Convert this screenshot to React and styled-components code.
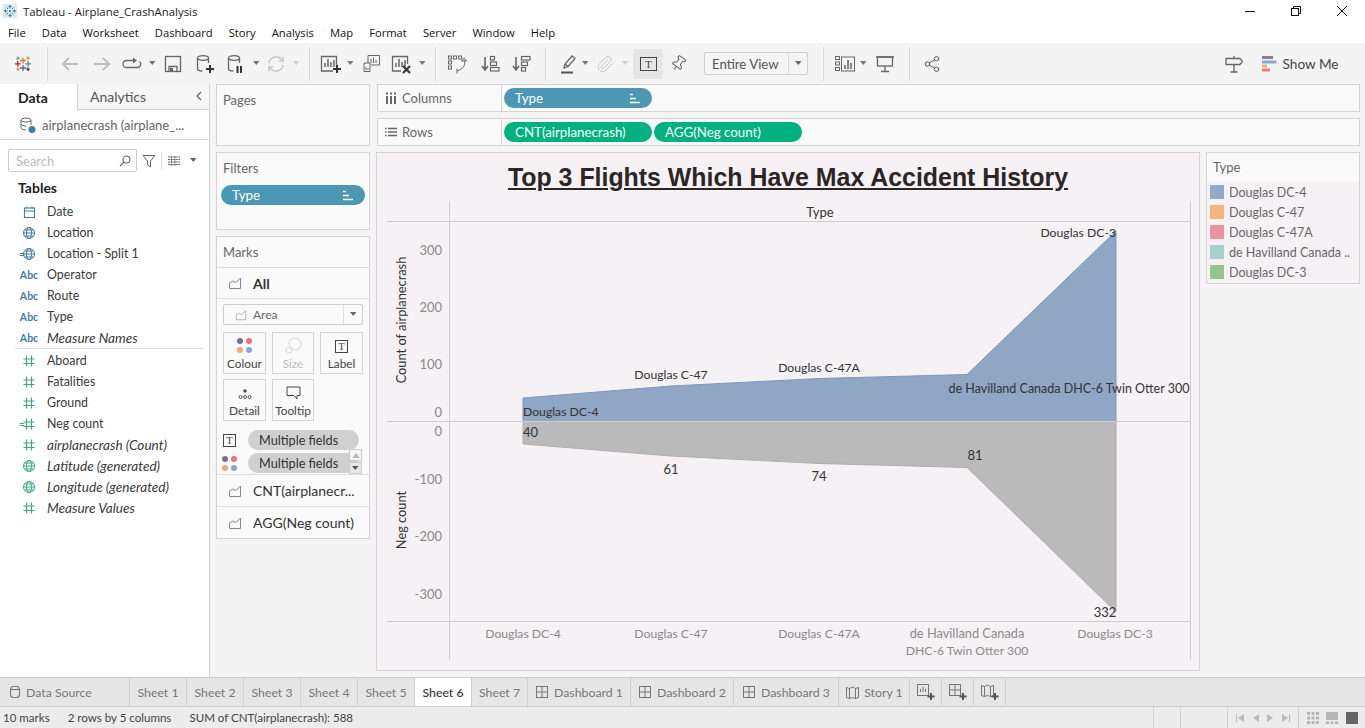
import React from "react";
import styled, { createGlobalStyle } from "styled-components";
import { Share2, Pin, Paperclip } from "lucide-react";

const book = `Lato, "Open Sans", sans-serif`;

const Global = createGlobalStyle`
  html, body { margin: 0; padding: 0; background: #fff; overflow: hidden; }
  * { box-sizing: border-box; }
`;

const Page = styled.div`
  width: 1365px; height: 728px; display: flex; flex-direction: column; overflow: hidden;
  font-family: ${book}; font-size: 13px; color: #333; background: #f4f4f4;
`;

const TitleBar = styled.div`
  height: 22px; background: #fff; display: flex; align-items: center; padding-left: 3px; flex: none;
`;
const TitleText = styled.div`
  font-family: "Open Sans", sans-serif; font-size: 11.4px; color: #222; margin-left: 6px;
`;
const WinControls = styled.div`
  margin-left: auto; display: flex; align-items: center; height: 22px;
`;
const WinButton = styled.div`
  width: 46px; height: 22px; display: flex; align-items: center; justify-content: center;
`;
const MenuBar = styled.div`
  height: 21px; flex: none; background: #fff; display: flex; align-items: center; padding-left: 8px; gap: 16.1px;
  font-family: "Open Sans", sans-serif; font-size: 11.2px; color: #111;
`;
const ToolBar = styled.div`
  height: 41px; flex: none; background: #f4f4f4; display: flex; align-items: center;
`;
const ToolSlot = styled.div`
  flex: none; display: flex; align-items: center; justify-content: center; height: 30px; color: #666;
  background: ${p => (p.$on ? "#e6e6e6" : "transparent")};
`;
const ToolSep = styled.div`
  width: 1px; height: 34px; background: #d8d8d8; flex: none;
`;
const FitBox = styled.div`
  flex: none; height: 23px; width: 104px; border: 1px solid #cfcfcf; border-radius: 2px; display: flex; align-items: center;
  font-size: 13.2px; color: #555;
`;
const FitLabel = styled.div`
  flex: 1; padding-left: 7px; border-right: 1px solid #d8d8d8; height: 100%; display: flex; align-items: center;
`;
const FitCaret = styled.div`
  width: 18px; display: flex; justify-content: center;
`;
const ShowMe = styled.div`
  display: flex; align-items: center; gap: 6px; font-size: 13.6px; color: #444; white-space: nowrap;
`;

const Main = styled.div`
  height: 593px; flex: none; display: flex;
`;
const DataPane = styled.div`
  width: 210px; flex: none; background: #fff; border-right: 1px solid #d4d4d4; display: flex; flex-direction: column;
`;
const PaneTabs = styled.div`
  height: 26px; display: flex; flex: none;
`;
const PaneTab = styled.div`
  width: ${p => p.$w}px; display: flex; align-items: center; font-size: 14px;
  padding-left: ${p => p.$pl}px; position: relative;
  font-weight: ${p => (p.$on ? 700 : 400)}; color: ${p => (p.$on ? "#222" : "#555")};
  background: ${p => (p.$on ? "#fff" : "#f6f6f6")};
  border-left: ${p => (p.$on ? "none" : "1px solid #d4d4d4")};
  border-bottom: ${p => (p.$on ? "none" : "1px solid #d4d4d4")};
`;
const Chevron = styled.div`
  position: absolute; right: 4px; top: 5px; color: #666; display: flex;
`;
const SourceRow = styled.div`
  height: 30px; flex: none; border-bottom: 1px solid #d8d8d8; display: flex; align-items: center; padding-left: 19px; gap: 5px; color: #666; font-size: 13px;
`;
const SearchRow = styled.div`
  display: flex; align-items: center; padding: 9px 0 0 8px; flex: none;
`;
const SearchBox = styled.div`
  width: 129px; height: 23px; border: 1px solid #ccc; border-radius: 2px; display: flex; align-items: center; justify-content: space-between; padding: 0 5px 0 7px; color: #bbb; font-size: 13px;
`;
const FilterBtn = styled.div`
  margin-left: 5px; display: flex; color: #666;
`;
const SearchSep = styled.div`
  width: 1px; height: 18px; background: #ddd; margin: 0 6px 0 5px;
`;
const CaretWrap = styled.div`
  margin-left: 10px; display: flex;
`;
const TablesHead = styled.div`
  font-weight: 700; font-size: 14px; color: #222; padding-left: 18px; height: 21px; margin-top: 5px; line-height: 21px; flex: none;
`;
const FieldList = styled.div`
  display: flex; flex-direction: column; margin-top: 3px;
`;
const FieldRow = styled.div`
  height: 21px; display: flex; align-items: center; flex: none; color: #3a3a3a;
  font-size: ${p => (p.$it ? 13.6 : 12.4)}px;
  font-style: ${p => (p.$it ? "italic" : "normal")};
`;
const FieldIcon = styled.div`
  width: 28px; margin: 0 4px 0 15px; display: flex; justify-content: center; align-items: center; position: relative; flex: none;
  font-size: 10.5px; font-weight: 700; font-style: normal; color: ${p => p.$c};
`;
const CalcMark = styled.span`
  position: absolute; left: 4px; top: 50%; transform: translateY(-50%); font-size: 10px; line-height: 1; font-weight: 700;
`;
const FieldDivider = styled.div`
  height: 1px; background: #ddd; margin: 0 6px 1px 15px; flex: none;
`;

const CardColumn = styled.div`
  width: 154px; margin-left: 6px; flex: none; display: flex; flex-direction: column; gap: 6px;
`;
const Card = styled.div`
  background: #fafafa; border: 1px solid #d4d4d4; height: ${p => p.$h}px; flex: none; display: flex; flex-direction: column;
`;
const CardTitle = styled.div`
  color: #666; font-size: 13px; padding-left: 6px; height: ${p => p.$h || 30}px; line-height: ${p => p.$h || 30}px; flex: none;
`;
const Pill = styled.div`
  height: 20px; border-radius: 10px; display: flex; align-items: center; justify-content: space-between;
  padding: 0 11px; color: #fff; font-size: 13.3px; width: ${p => p.$w}px; flex: none;
  background: ${p => p.$c};
`;
const FilterPills = styled.div`
  padding: 2px 0 0 4px;
`;
const MarksRow = styled.div`
  height: ${p => p.$h}px; flex: none; border-top: 1px solid #ddd; display: flex; align-items: center; padding-left: 11px; gap: 11px;
  font-size: 14px; color: #333; font-weight: ${p => (p.$bold ? 700 : 400)};
`;
const MarksDivider = styled.div`
  height: 1px; flex: none; background: #ddd;
`;
const MarkType = styled.div`
  margin: 5px 0 0 6px; width: 140px; height: 21px; border: 1px solid #ccc; border-radius: 2px; display: flex; align-items: center; flex: none; color: #666; font-size: 12px;
`;
const MarkTypeLabel = styled.div`
  flex: 1; display: flex; align-items: center; gap: 6px; padding-left: 11px; border-right: 1px solid #ddd; height: 100%;
`;
const MarkTypeCaret = styled.div`
  width: 18px; display: flex; justify-content: center;
`;
const MarkGrid = styled.div`
  display: grid; grid-template-columns: 43px 42px 43px; column-gap: 6px; row-gap: 5px; margin: 7px 0 0 6px; flex: none;
`;
const MarkButton = styled.div`
  height: 42px; border: 1px solid #d4d4d4; display: flex; flex-direction: column; align-items: center; justify-content: flex-end; padding-bottom: 2px; gap: 3px;
  font-size: 11.8px; color: ${p => (p.$dim ? "#bbb" : "#444")};
`;
const EncodingList = styled.div`
  margin-top: 9px; height: 44px; overflow: hidden; display: flex; flex-direction: column; gap: 3px; position: relative; flex: none;
`;
const EncodingRow = styled.div`
  display: flex; align-items: center; height: 20px; padding-left: 6px; gap: 6px; flex: none;
`;
const EncodingIcon = styled.div`
  width: 13px; display: flex; justify-content: center;
`;
const GreyPill = styled.div`
  width: 111px; height: 20px; border-radius: 10px; background: #d0d0d0; color: #333; font-size: 12.7px; padding-left: 11px; display: flex; align-items: center;
  margin-left: 6px; flex: none;
`;
const MiniScroll = styled.div`
  position: absolute; right: 7px; bottom: 0; width: 13px; height: 25px; display: flex; flex-direction: column; gap: 1px;
`;
const MiniArrow = styled.div`
  flex: 1; display: flex; align-items: center; justify-content: center; border: 1px solid #ccc; background: ${p => (p.$on ? "#f5f5f5" : "#e6e6e6")};
`;

const Workspace = styled.div`
  flex: none; margin-left: 6px; width: 984px; display: flex; flex-direction: column; gap: 6px;
`;
const Shelf = styled.div`
  height: 28px; margin-left: 1px; background: #fafafa; border: 1px solid #d4d4d4; display: flex; flex: none; width: 983px;
`;
const ShelfLabel = styled.div`
  width: 124px; border-right: 1px solid #d4d4d4; display: flex; align-items: center; gap: 5px; padding-left: 7px; color: #666; font-size: 13px; flex: none;
`;
const ShelfPills = styled.div`
  display: flex; align-items: center; gap: 2px; padding-left: 2px;
`;
const ViewRow = styled.div`
  display: flex; gap: 6px; flex: none;
`;
const ChartCard = styled.div`
  width: 824px; height: 519px; background: #f6f1f5; border: 1px solid #d4d4d4; display: flex; flex-direction: column; flex: none;
`;
const ChartTitle = styled.div`
  height: 44px; display: flex; justify-content: center; align-items: center; padding-top: 5px; flex: none;
  font-family: "Liberation Sans", Arial, sans-serif; font-weight: 700; font-size: 24.9px; color: #2b2526; text-decoration: underline;
`;
const ChartSvg = styled.svg`
  display: block; flex: none;
  font-family: ${book};
`;
const LegendCard = styled.div`
  width: 154px; height: 132px; background: #fafafa; border: 1px solid #d4d4d4; flex: none; display: flex; flex-direction: column;
`;
const LegendList = styled.div`
  background: #f6f1f5; flex: 1; display: flex; flex-direction: column;
`;
const LegendRow = styled.div`
  height: 20px; display: flex; align-items: center; padding-left: 3px; gap: 5px; font-size: 12.5px; color: #666; flex: none; white-space: nowrap;
`;
const Swatch = styled.div`
  width: 14px; height: 14px; background: ${p => p.$c}; flex: none;
`;

const TabStrip = styled.div`
  height: 30px; flex: none; display: flex; background: #e6e6e6; border-top: 1px solid #ccc; border-bottom: 1px solid #ccc;
`;
const Tab = styled.div`
  width: ${p => p.$w}px; flex: none; display: flex; align-items: center; justify-content: ${p => (p.$start ? "flex-start" : "center")}; gap: 5px; border-right: 1px solid #d0d0d0;
  padding-left: ${p => (p.$start ? 9 : 0)}px;
  font-size: 12.3px; color: ${p => (p.$on ? "#333" : "#777")}; font-weight: ${p => (p.$on ? 500 : 400)};
  background: ${p => (p.$on ? "#fff" : "transparent")};
`;
const StatusBar = styled.div`
  height: 21px; flex: none; display: flex; align-items: center; background: #ececec; font-size: 11.55px; color: #444;
`;
const StatusText = styled.div`
  flex: none; margin-left: ${p => p.$ml}px; white-space: nowrap;
`;
const StatusCell = styled.div`
  width: ${p => p.$w}px; height: 100%; flex: none; border-left: 1px solid #d0d0d0; display: flex; align-items: center; justify-content: space-evenly;
  margin-left: ${p => (p.$push ? "auto" : "0")};
`;

const Ico = styled.svg`
  display: block; flex: none; overflow: visible;
`;
const PinTilt = styled(Pin)`
  transform: rotate(35deg);
`;
const I = ({ w = 20, h = 20, c = "#666", sw = 1.3, children }) => (
  <Ico width={w} height={h} viewBox={`0 0 ${w} ${h}`} fill="none" stroke={c} strokeWidth={sw}>{children}</Ico>
);
const Caret = ({ c = "#777", w = 6.5 }) => (
  <Ico width={w} height={w * 0.62} viewBox="0 0 8 5"><path d="M0 0h8L4 5z" fill={c} /></Ico>
);

const Snow = () => (
  <Ico width={14} height={14} viewBox="0 0 14 14" fill="none">
    <rect width="14" height="14" fill="#dbe9f2" />
    <g stroke="#2f7da8" strokeWidth="1">
      <path d="M7 1v3.500M5.500 2.500h3M7 9.500V13M5.500 11.500h3M1 7h3.500M2.500 5.500v3M9.500 7H13M11.500 5.500v3" />
      <path d="M3.500 3.500l1.500 1.500M10.500 3.500L9 5M3.500 10.500L5 9M10.500 10.500L9 9" />
      <path d="M6 7h2M7 6v2" />
    </g>
  </Ico>
);
const TabLogo = () => (
  <Ico width={18} height={18} viewBox="0 0 18 18" fill="none" strokeWidth="1.3">
    <path d="M9 2.500v6M6 5.500h6" stroke="#e8762b" />
    <path d="M9 10v6M6 13h6" stroke="#5b6591" />
    <path d="M3.800 6v5.500M1 8.800h5.500" stroke="#c72037" />
    <path d="M14.200 6v5.500M11.500 8.800H17" stroke="#59879b" />
    <path d="M4 1.500V5M2.300 3.200h3.500" stroke="#7099a6" />
    <path d="M14 1.500V5M12.300 3.200h3.500" stroke="#eb912b" />
    <path d="M4 12.500V16M2.300 14.200h3.500" stroke="#eb912b" />
    <path d="M14 12.500V16M12.300 14.200h3.500" stroke="#1f447d" />
  </Ico>
);
const Back = () => <I c="#bdbdbd" sw={2}><path d="M18 10H3M9 4l-6 6 6 6" /></I>;
const Fwd = () => <I c="#bdbdbd" sw={2}><path d="M2 10h15M11 4l6 6-6 6" /></I>;
const Loop = () => (
  <I><path d="M11 6.500H4.500a3.400 3.400 0 0 0 0 7h11a3.400 3.400 0 0 0 2-6" /><path d="M11 3.500l4 3-4 3z" fill="#666" stroke="none" /></I>
);
const Save = () => <I><rect x="2.500" y="2.500" width="15" height="15" /><path d="M6 17.500v-5h8v5" /><rect x="7" y="14" width="3" height="3" fill="#666" stroke="none" /></I>;
const Cyl = ({ children }) => (
  <I><ellipse cx="8" cy="4" rx="5.500" ry="2.300" /><path d="M2.500 4v11c0 1.300 2 2 5 2M13.500 4v5" />{children}</I>
);
const NewDs = () => <Cyl><path d="M15 11v8M11 15h8" stroke="#333" strokeWidth="2" /></Cyl>;
const PauseDs = () => <Cyl><path d="M11.500 12v7M15 12v7" stroke="#333" strokeWidth="2" /></Cyl>;
const Refresh = () => (
  <I c="#c8c8c8" sw={1.600}><path d="M3 9a7 7 0 0 1 12-4l2 2M17 11a7 7 0 0 1-12 4l-2-2" /><path d="M17 3v4h-4M3 17v-4h4" /></I>
);
const Bars = () => <path d="M5 13V9M8 13V5M11 13V8M14 13V6" strokeWidth="1.500" />;
const NewSheet = () => (
  <I w={22} h={20}><path d="M13 17H1.500V2.500h15V12" /><Bars /><path d="M17 11v8M13 15h8" stroke="#333" strokeWidth="2" /></I>
);
const DupSheet = () => (
  <I w={20} h={20} sw={1}>
    <path d="M6 12V1.500h11.500V11H9" /><path d="M9 9V5M11.500 9V3.500M14 9V6" />
    <path d="M2 9h6v8.500H2z" fill="#f4f4f4" /><path d="M4 16v-3M6 16v-2" />
  </I>
);
const ClearSheet = () => (
  <I w={22} h={20}><path d="M10 17H1.500V2.500h15V10" /><Bars /><path d="M12 12l7 7M19 12l-7 7" stroke="#333" strokeWidth="2" /></I>
);
const Swap = () => (
  <I sw={1}>
    <rect x="1.500" y="2" width="3" height="3" /><rect x="6.500" y="2" width="3" height="3" /><rect x="11.500" y="2" width="3" height="3" />
    <rect x="1.500" y="7" width="3" height="3" /><rect x="1.500" y="12" width="3" height="3" />
    <path d="M17 6c2 4 0 9-7 11M10 14.500v5M17 4l2.500 3h-5z" />
  </I>
);
const SortUp = () => (
  <I sw={1.200}><path d="M5 3v13M2 12l3 4 3-4" strokeWidth="1.600" /><rect x="10.500" y="2.500" width="4" height="3.500" /><rect x="10.500" y="8" width="6" height="3.500" /><rect x="10.500" y="13.500" width="8.500" height="3.500" /></I>
);
const SortDown = () => (
  <I sw={1.200}><path d="M5 3v13M2 12l3 4 3-4" strokeWidth="1.600" /><rect x="10.500" y="2.500" width="8.500" height="3.500" /><rect x="10.500" y="8" width="6" height="3.500" /><rect x="10.500" y="13.500" width="4" height="3.500" /></I>
);
const Pen = () => (
  <I><path d="M6 14l1-4 7-8 3 2.500-7 8z" /><path d="M7 10l3 2.500" /><path d="M3 18.500h12" stroke="#555" strokeWidth="2" /></I>
);
const TBox = ({ s = 17, h = 14 }) => (
  <Ico width={s} height={h} viewBox={`0 0 ${s} ${h}`} fill="none">
    <rect x=".5" y=".5" width={s - 1} height={h - 1} stroke="#444" />
    <text x={s / 2} y={h - 3} textAnchor="middle" fontSize="10.500" fontFamily="Liberation Serif, serif" fill="#444">T</text>
  </Ico>
);
const MiniShowMe = () => (
  <I w={22}><g strokeWidth="1"><rect x="1.500" y="2.500" width="4" height="3" /><rect x="1.500" y="8" width="4" height="3" /><rect x="1.500" y="13.500" width="4" height="3" /><rect x="7.500" y="3" width="13" height="14" /></g><path d="M11 15v-4M14 15V6M17 15V9" strokeWidth="1.600" /></I>
);
const Present = () => (
  <I w={18}><rect x="1.500" y="3" width="15" height="9" /><path d="M0 3h18M9 12v5M5 17.500h8" /></I>
);
const Sign = () => (
  <I w={20}><path d="M2 4.500h14l2.500 3-2.500 3H2z" /><path d="M10 2v2.500M10 10.500v7M6.500 18h7" /></I>
);
const ShowBars = () => (
  <Ico width={15} height={16} viewBox="0 0 15 16">
    <rect y="0" width="11" height="3" fill="#8c7aa5" /><rect y="4.500" width="14.500" height="3" fill="#85a9cf" />
    <rect y="8.500" width="5" height="3" fill="#f4a97f" /><rect y="12.500" width="8" height="3" fill="#f27a86" />
  </Ico>
);
const Dots = () => (
  <Ico width={15} height={15} viewBox="0 0 15 15">
    <circle cx="3" cy="3" r="3" fill="#7f6a96" /><circle cx="12" cy="3" r="3" fill="#ee6f80" />
    <circle cx="3" cy="12" r="3" fill="#f4a67c" /><circle cx="12" cy="12" r="3" fill="#82a9d4" />
  </Ico>
);
const AreaIco = ({ c = "#888", s = 14 }) => (
  <Ico width={s} height={s} viewBox="0 0 14 14" fill="none" stroke={c} strokeWidth="1">
    <path d="M1.500 12.500V7l3.500-2 2.500 2L12.500 2v10.500z" />
  </Ico>
);
const Cal = ({ c }) => (
  <I w={14} h={14} c={c} sw={1.100}><rect x="2.500" y="3" width="10" height="9.500" /><path d="M2.500 6h10M5 1.500v2M10 1.500v2" /></I>
);
const Globe = ({ c }) => (
  <I w={14} h={14} c={c} sw={1}><circle cx="7" cy="7" r="5.500" /><ellipse cx="7" cy="7" rx="2.500" ry="5.500" /><path d="M1.500 7h11M2.500 4h9M2.500 10h9" /></I>
);
const Hash = ({ c }) => (
  <I w={14} h={14} c={c} sw={1.200}><path d="M4.500 1.500v11M9.500 1.500v11M1.500 5h11M1.500 9.500h11" /></I>
);
const Sorted = () => (
  <I w={12} h={12} c="#fff" sw={1.500}><path d="M1 2.500h3M1 6.500h6M1 10.500h10" /></I>
);
const DbSmall = () => (
  <I w={12} h={14} c="#777" sw={1.100}><rect x="1.500" y="1.500" width="9" height="11" rx="3" /><path d="M1.500 4.500h9" /></I>
);
const GridSmall = ({ plus }) => (
  <I w={plus ? 20 : 14} h={plus ? 18 : 14} c="#777" sw={1}><rect x="1.500" y="1.500" width="11" height="11" /><path d="M7 1.500v11M1.500 7h11" />{plus && <path d="M15 10v7M11.500 13.500h7" stroke="#555" strokeWidth="2" />}</I>
);
const BookSmall = ({ plus }) => (
  <I w={plus ? 20 : 14} h={plus ? 18 : 14} c="#777" sw={1}><path d="M1.500 2.500l3 1 3-1.500 3 1.500 3-1v10l-3 1-3-1-3 1-3-1zM4.500 3.500v10M10.500 3.500v10" />{plus && <path d="M15 10v7M11.500 13.500h7" stroke="#555" strokeWidth="2" />}</I>
);
const SheetPlus = () => (
  <I w={20} h={18} c="#777" sw={1}><rect x="1.500" y="1.500" width="11" height="11" /><path d="M4.500 9V6M7 9V4M9.500 9V6" /><path d="M15 10v7M11.500 13.500h7" stroke="#555" strokeWidth="2" /></I>
);

const toolItems = [
  { x: 23, w: 18, n: <TabLogo /> },
  { x: 47, w: 1, sep: true },
  { x: 70, w: 20, n: <Back /> },
  { x: 102, w: 20, n: <Fwd /> },
  { x: 132, w: 20, n: <Loop /> },
  { x: 152, w: 8, n: <Caret /> },
  { x: 173, w: 20, n: <Save /> },
  { x: 205, w: 20, n: <NewDs /> },
  { x: 236, w: 20, n: <PauseDs /> },
  { x: 256, w: 8, n: <Caret /> },
  { x: 276, w: 20, n: <Refresh /> },
  { x: 296, w: 8, n: <Caret c="#ccc" /> },
  { x: 309, w: 1, sep: true },
  { x: 331, w: 22, n: <NewSheet /> },
  { x: 350, w: 8, n: <Caret /> },
  { x: 372, w: 20, n: <DupSheet /> },
  { x: 402, w: 22, n: <ClearSheet /> },
  { x: 422, w: 8, n: <Caret /> },
  { x: 435, w: 1, sep: true },
  { x: 457, w: 20, n: <Swap /> },
  { x: 490, w: 20, n: <SortUp /> },
  { x: 521, w: 20, n: <SortDown /> },
  { x: 545, w: 1, sep: true },
  { x: 568, w: 20, n: <Pen /> },
  { x: 585, w: 8, n: <Caret /> },
  { x: 605, w: 18, n: <Paperclip size={18} color="#c4c4c4" strokeWidth={1.3} /> },
  { x: 625, w: 8, n: <Caret c="#ccc" /> },
  { x: 648, w: 30, on: true, n: <TBox /> },
  { x: 678, w: 18, n: <PinTilt size={17} color="#555" strokeWidth={1.3} /> },
  { x: 756, w: 104, fit: true },
  { x: 823, w: 1, sep: true },
  { x: 845, w: 22, n: <MiniShowMe /> },
  { x: 863, w: 8, n: <Caret /> },
  { x: 885, w: 18, n: <Present /> },
  { x: 909, w: 1, sep: true },
  { x: 932, w: 18, n: <Share2 size={18} color="#555" strokeWidth={1.3} /> },
  { x: 1234, w: 20, n: <Sign /> },
  { x: 1300, w: 76, show: true },
];

function Toolbar() {
  let right = 0;
  return (
    <ToolBar>
      {toolItems.map((it, i) => {
        const left = it.x - it.w / 2;
        const ml = left - right;
        right = left + it.w;
        const style = { marginLeft: ml, width: it.w };
        if (it.sep) return <ToolSep key={i} style={{ marginLeft: ml }} />;
        if (it.fit)
          return (
            <FitBox key={i} style={{ marginLeft: ml }}>
              <FitLabel>Entire View</FitLabel>
              <FitCaret><Caret c="#666" /></FitCaret>
            </FitBox>
          );
        if (it.show)
          return (
            <ToolSlot key={i} style={style}>
              <ShowMe><ShowBars />Show Me</ShowMe>
            </ToolSlot>
          );
        return <ToolSlot key={i} style={style} $on={it.on}>{it.n}</ToolSlot>;
      })}
    </ToolBar>
  );
}

const BLUE = "#3f7f9c";
const GREEN = "#3fa985";
const fields = [
  { t: "Date", k: "cal" }, { t: "Location", k: "globe" }, { t: "Location - Split 1", k: "globe", calc: 1 },
  { t: "Operator", k: "abc" }, { t: "Route", k: "abc" }, { t: "Type", k: "abc" }, { t: "Measure Names", k: "abc", it: 1 },
  { div: 1 },
  { t: "Aboard", k: "hash" }, { t: "Fatalities", k: "hash" }, { t: "Ground", k: "hash" }, { t: "Neg count", k: "hash", calc: 1, g: 1 },
  { t: "airplanecrash (Count)", k: "hash", it: 1 }, { t: "Latitude (generated)", k: "globe", it: 1, g: 1 },
  { t: "Longitude (generated)", k: "globe", it: 1, g: 1 }, { t: "Measure Values", k: "hash", it: 1 },
];
function FieldGlyph({ k, c }) {
  if (k === "cal") return <Cal c={c} />;
  if (k === "globe") return <Globe c={c} />;
  if (k === "hash") return <Hash c={c} />;
  return <span>Abc</span>;
}

const chartText = "#333";
const axisText = "#8a8a8a";
const zero = 421;
const xs = [523, 671, 819, 967, 1116];
const upper = [398, 386, 378.5, 374.5, 231];
const lower = [444, 456, 463.500, 467.500, 612];
const toPts = (ys) => ys.map((y, i) => `${xs[i]},${y}`).join(" ");

function Chart() {
  const t = (x, y, s, a = "middle", c = chartText, fs = 12.2) => (
    <text key={s + x + y} x={x} y={y + 4.500} textAnchor={a} fontSize={fs} fill={c}>{s}</text>
  );
  return (
    <ChartSvg width="822" height="473" viewBox="377 197 822 473">
      <polygon points={`523,${zero} ${toPts(upper)} 1116,${zero}`} fill="#8fa6c4" stroke="#7c98bd" strokeWidth="1" />
      <polygon points={`523,${zero} ${toPts(lower)} 1116,${zero}`} fill="#bbbabb" stroke="#aeaeae" strokeWidth="1" />
      <g stroke="#cfcbcf" strokeWidth="1">
        <path d="M449.500 201v459M1190.500 201v459M387 221.500h803.500M387 621.500h803.500" />
        <path d="M387 421.500h803.500" />
      </g>
      {t(820, 212, "Type", "middle", chartText, 13)}
      {[["300", 250], ["200", 307], ["100", 364], ["0", 412], ["0", 431], ["-100", 479], ["-200", 536], ["-300", 594]].map(([s, y]) => t(442, y, s, "end", axisText, 13))}
      <text transform="translate(406 320) rotate(-90)" textAnchor="middle" fontSize="12.8" fill={chartText}>Count of airplanecrash</text>
      <text transform="translate(406 520) rotate(-90)" textAnchor="middle" fontSize="12.8" fill={chartText}>Neg count</text>
      {t(1116, 232, "Douglas DC-3", "end")}
      {t(671, 374, "Douglas C-47")}
      {t(819, 367, "Douglas C-47A")}
      {t(1069, 388, "de Havilland Canada DHC-6 Twin Otter 300", "middle", chartText, 12.5)}
      {t(523, 411, "Douglas DC-4", "start")}
      {t(523, 432, "40", "start", chartText, 13)}
      {t(671, 469, "61", "middle", chartText, 13)}
      {t(819, 476, "74", "middle", chartText, 13)}
      {t(975, 455, "81", "middle", chartText, 13)}
      {t(1105, 612, "332", "middle", chartText, 13)}
      {t(523, 633, "Douglas DC-4", "middle", axisText)}
      {t(671, 633, "Douglas C-47", "middle", axisText)}
      {t(819, 633, "Douglas C-47A", "middle", axisText)}
      {t(967, 633, "de Havilland Canada", "middle", axisText, 12.8)}
      {t(967, 650, "DHC-6 Twin Otter 300", "middle", axisText)}
      {t(1115, 633, "Douglas DC-3", "middle", axisText)}
    </ChartSvg>
  );
}

const legend = [
  ["Douglas DC-4", "#92a9c8"], ["Douglas C-47", "#f5b57a"], ["Douglas C-47A", "#ea9399"],
  ["de Havilland Canada ..", "#a9cfcb"], ["Douglas DC-3", "#98c291"],
];
const tabs = [
  [130, "Data Source", <DbSmall />, false, true], [57, "Sheet 1"], [57, "Sheet 2"], [57, "Sheet 3"], [57, "Sheet 4"], [57, "Sheet 5"],
  [57, "Sheet 6", null, true], [56, "Sheet 7"], [103, "Dashboard 1", <GridSmall />], [103, "Dashboard 2", <GridSmall />],
  [105, "Dashboard 3", <GridSmall />], [71, "Story 1", <BookSmall />], [32, "", <SheetPlus />], [32, "", <GridSmall plus />], [32, "", <BookSmall plus />],
];

export default function App() {
  return (
    <Page>
      <Global />
      <TitleBar>
        <Snow />
        <TitleText>Tableau - Airplane_CrashAnalysis</TitleText>
        <WinControls>
          <WinButton><I w={12} h={12} c="#111" sw={1}><path d="M1 6.500h10" /></I></WinButton>
          <WinButton><I w={12} h={12} c="#111" sw={1}><rect x="1.500" y="3.500" width="7" height="7" /><path d="M3.500 3.500v-2h7v7h-2" /></I></WinButton>
          <WinButton><I w={12} h={12} c="#111" sw={1}><path d="M1 1l10 10M11 1L1 11" /></I></WinButton>
        </WinControls>
      </TitleBar>
      <MenuBar>
        {["File", "Data", "Worksheet", "Dashboard", "Story", "Analysis", "Map", "Format", "Server", "Window", "Help"].map(m => <div key={m}>{m}</div>)}
      </MenuBar>
      <Toolbar />
      <Main>
        <DataPane>
          <PaneTabs>
            <PaneTab $w={77} $pl={18} $on>Data</PaneTab>
            <PaneTab $w={132} $pl={12}>
              Analytics
              <Chevron><I w={12} h={14} c="#666" sw={1.200}><path d="M8 3L4 7l4 4" /></I></Chevron>
            </PaneTab>
          </PaneTabs>
          <SourceRow>
            <I w={18} h={18} c="#666" sw={1}>
              <ellipse cx="7" cy="4" rx="5" ry="2" /><path d="M2 4v8c0 1 2 2 5 2M12 4v5M2 8c0 1 2 2 5 2" />
              <circle cx="13" cy="13.500" r="3.500" fill="#3f7f9c" stroke="none" />
            </I>
            airplanecrash (airplane_...
          </SourceRow>
          <SearchRow>
            <SearchBox>
              Search
              <I w={12} h={12} c="#666" sw={1.100}><circle cx="7.500" cy="4.500" r="3.500" /><path d="M5 7l-4 4" /></I>
            </SearchBox>
            <FilterBtn><I w={14} h={14} c="#666" sw={1}><path d="M1 1.500h12L8.500 7v6l-3-2V7z" /></I></FilterBtn>
            <SearchSep />
            <I w={12} h={10} c="#666" sw={1}><path d="M0 1h12M0 3.500h12M0 6h12M0 8.500h12M3.500 0v10M7 0v10" strokeDasharray="2 .6" /></I>
            <CaretWrap><Caret c="#666" /></CaretWrap>
          </SearchRow>
          <TablesHead>Tables</TablesHead>
          <FieldList>
            {fields.map((f, i) => {
              if (f.div) return <FieldDivider key={i} />;
              const c = f.g || (f.k === "hash") ? GREEN : BLUE;
              return (
                <FieldRow key={i} $it={f.it}>
                  <FieldIcon $c={c}>
                    {f.calc && <CalcMark>=</CalcMark>}
                    <FieldGlyph k={f.k} c={c} />
                  </FieldIcon>
                  {f.t}
                </FieldRow>
              );
            })}
          </FieldList>
        </DataPane>

        <CardColumn>
          <Card $h={62}><CardTitle>Pages</CardTitle></Card>
          <Card $h={78}>
            <CardTitle>Filters</CardTitle>
            <FilterPills><Pill $w={144} $c="#4b97b4">Type<Sorted /></Pill></FilterPills>
          </Card>
          <Card $h={303}>
            <CardTitle>Marks</CardTitle>
            <MarksRow $bold $h={31}><AreaIco />All</MarksRow>
            <MarksDivider />
            <MarkType>
              <MarkTypeLabel><AreaIco c="#aaa" s={12} />Area</MarkTypeLabel>
              <MarkTypeCaret><Caret c="#666" /></MarkTypeCaret>
            </MarkType>
            <MarkGrid>
              <MarkButton><Dots />Colour</MarkButton>
              <MarkButton $dim>
                <I w={18} h={16} c="#ddd" sw={1.200}><circle cx="11" cy="7" r="6" /><circle cx="5" cy="13" r="3" /></I>
                Size
              </MarkButton>
              <MarkButton><TBox s={13} h={13} />Label</MarkButton>
              <MarkButton>
                <Ico width={14} height={12} viewBox="0 0 14 12" fill="none" stroke="#555">
                  <circle cx="7" cy="3" r="1.800" fill="#555" stroke="none" />
                  <circle cx="2.500" cy="9" r="1.500" /><circle cx="7" cy="9" r="1.500" /><circle cx="11.500" cy="9" r="1.500" />
                </Ico>
                Detail
              </MarkButton>
              <MarkButton>
                <I w={15} h={14} c="#444" sw={1}><path d="M1 1h13v8.500H11V13L8 9.500H1z" /></I>
                Tooltip
              </MarkButton>
            </MarkGrid>
            <EncodingList>
              <EncodingRow><EncodingIcon><TBox s={13} h={13} /></EncodingIcon><GreyPill>Multiple fields</GreyPill></EncodingRow>
              <EncodingRow><EncodingIcon><Dots /></EncodingIcon><GreyPill>Multiple fields</GreyPill></EncodingRow>
              <MiniScroll>
                <MiniArrow $on><Ico width={8} height={5} viewBox="0 0 8 5"><path d="M0 5h8L4 0z" fill="#bbb" /></Ico></MiniArrow>
                <MiniArrow><Caret c="#555" /></MiniArrow>
              </MiniScroll>
            </EncodingList>
            <MarksRow $h={32}><AreaIco />CNT(airplanecr...</MarksRow>
            <MarksRow $h={32}><AreaIco />AGG(Neg count)</MarksRow>
          </Card>
        </CardColumn>

        <Workspace>
          <Shelf>
            <ShelfLabel>
              <I w={12} h={12} c="#666" sw={2}><path d="M2 4v8M6 4v8M10 4v8M2 .500v2M6 .500v2M10 .500v2" /></I>
              Columns
            </ShelfLabel>
            <ShelfPills><Pill $w={148} $c="#4b97b4">Type<Sorted /></Pill></ShelfPills>
          </Shelf>
          <Shelf>
            <ShelfLabel>
              <I w={12} h={12} c="#666" sw={1.600}><path d="M3 2.500h9M3 6h9M3 9.500h9M0 2.500h1.500M0 6h1.500M0 9.500h1.500" /></I>
              Rows
            </ShelfLabel>
            <ShelfPills>
              <Pill $w={148} $c="#00b180">CNT(airplanecrash)</Pill>
              <Pill $w={148} $c="#00b180">AGG(Neg count)</Pill>
            </ShelfPills>
          </Shelf>
          <ViewRow>
            <ChartCard>
              <ChartTitle>Top 3 Flights Which Have Max Accident History</ChartTitle>
              <Chart />
            </ChartCard>
            <LegendCard>
              <CardTitle $h={29}>Type</CardTitle>
              <LegendList>
                {legend.map(([s, c]) => <LegendRow key={s}><Swatch $c={c} />{s}</LegendRow>)}
              </LegendList>
            </LegendCard>
          </ViewRow>
        </Workspace>
      </Main>
      <TabStrip>
        {tabs.map(([w, s, ic, on, start], i) => <Tab key={i} $w={w} $on={on} $start={start}>{ic}{s}</Tab>)}
      </TabStrip>
      <StatusBar>
        <StatusText $ml={3}>10 marks</StatusText>
        <StatusText $ml={18}>2 rows by 5 columns</StatusText>
        <StatusText $ml={18}>SUM of CNT(airplanecrash): 588</StatusText>
        <StatusCell $w={27} $push />
        <StatusCell $w={47} />
        <StatusCell $w={71}>
          <I w={10} h={10} c="#bbb" sw={1}><path d="M1.500 1v8" /><path d="M9 1v8L3 5z" fill="#bbb" stroke="none" /></I>
          <I w={8} h={10} c="#bbb"><path d="M7 1v8L1 5z" fill="#bbb" stroke="none" /></I>
          <I w={8} h={10} c="#bbb"><path d="M1 1v8l6-4z" fill="#bbb" stroke="none" /></I>
          <I w={10} h={10} c="#bbb" sw={1}><path d="M8.500 1v8" /><path d="M1 1v8l6-4z" fill="#bbb" stroke="none" /></I>
        </StatusCell>
        <StatusCell $w={67}>
          <I w={12} h={12}><g fill="#b5b5b5" stroke="none"><rect width="3" height="3" /><rect x="4.500" width="3" height="3" /><rect x="9" width="3" height="3" /><rect y="4.500" width="3" height="3" /><rect x="4.500" y="4.500" width="3" height="3" /><rect x="9" y="4.500" width="3" height="3" /><rect y="9" width="3" height="3" /><rect x="4.500" y="9" width="3" height="3" /><rect x="9" y="9" width="3" height="3" /></g></I>
          <I w={12} h={12}><g fill="#b5b5b5" stroke="none"><rect width="12" height="8" /><rect y="9.500" width="3" height="2.500" /><rect x="4.500" y="9.500" width="3" height="2.500" /><rect x="9" y="9.500" width="3" height="2.500" /></g></I>
          <I w={12} h={12}><rect width="12" height="12" fill="#666" stroke="none" /></I>
        </StatusCell>
      </StatusBar>
    </Page>
  );
}
